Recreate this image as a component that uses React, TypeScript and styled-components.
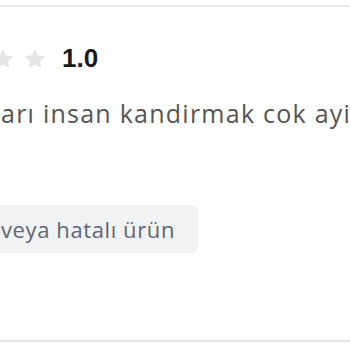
import React from 'react';
import styled, { createGlobalStyle } from 'styled-components';

const GlobalStyle = createGlobalStyle`
  html, body {
    margin: 0;
    padding: 0;
    background: #fff;
    overflow: hidden;
  }
`;

const Star = ({ filled }: { filled?: boolean }) => (
  <svg width="22" height="21" viewBox="0 0 24 23">
    <path
      d="M12 0.8l3.4 7.1 7.8 1-5.7 5.4 1.4 7.7L12 18.3l-6.9 3.7 1.4-7.7L0.8 8.9l7.8-1z"
      fill={filled ? '#ffb400' : '#e6e6e6'}
    />
  </svg>
);

const App = () => (
  <>
    <GlobalStyle />
    <Page>
      <Card>
        <RatingRow>
          <Stars>
            <Star filled />
            <Star />
            <Star />
            <Star />
            <Star />
          </Stars>
          <Score>1.0</Score>
        </RatingRow>
        <Comment>arı insan kandirmak cok ayi</Comment>
        <Tags>
          <Tag>veya hatalı ürün</Tag>
        </Tags>
      </Card>
    </Page>
  </>
);

const Page = styled.div`
  width: 350px;
  height: 350px;
  overflow: hidden;
  padding-top: 5px;
  box-sizing: border-box;
`;

const Card = styled.div`
  height: 337px;
  box-sizing: border-box;
  border-top: 2px solid #e8e8e8;
  border-bottom: 2px solid #e4e4e4;
  display: flex;
  flex-direction: column;
  padding-top: 37px;
  white-space: nowrap;
`;

const RatingRow = styled.div`
  display: flex;
  align-items: center;
  gap: 16px;
  height: 28px;
  margin-left: -104px;
`;

const Stars = styled.div`
  display: flex;
  gap: 10px;
`;

const Score = styled.span`
  font-family: 'Liberation Sans', Arial, sans-serif;
  font-weight: 700;
  font-size: 26px;
  color: #1a1a1a;
`;

const Comment = styled.p`
  margin: 25px 0 0 1px;
  font-family: 'Open Sans', sans-serif;
  font-size: 25px;
  letter-spacing: 1.25px;
  line-height: 32px;
  color: #555;
`;

const Tags = styled.div`
  display: flex;
  margin-top: 76px;
  margin-left: -24px;
`;

const Tag = styled.span`
  display: inline-flex;
  align-items: center;
  height: 48px;
  padding: 0 23px 0 25px;
  border-radius: 6px;
  background: #f1f2f4;
  font-family: 'Open Sans', sans-serif;
  font-size: 22px;
  letter-spacing: 0.6px;
  color: #5f6675;
`;

export default App;
